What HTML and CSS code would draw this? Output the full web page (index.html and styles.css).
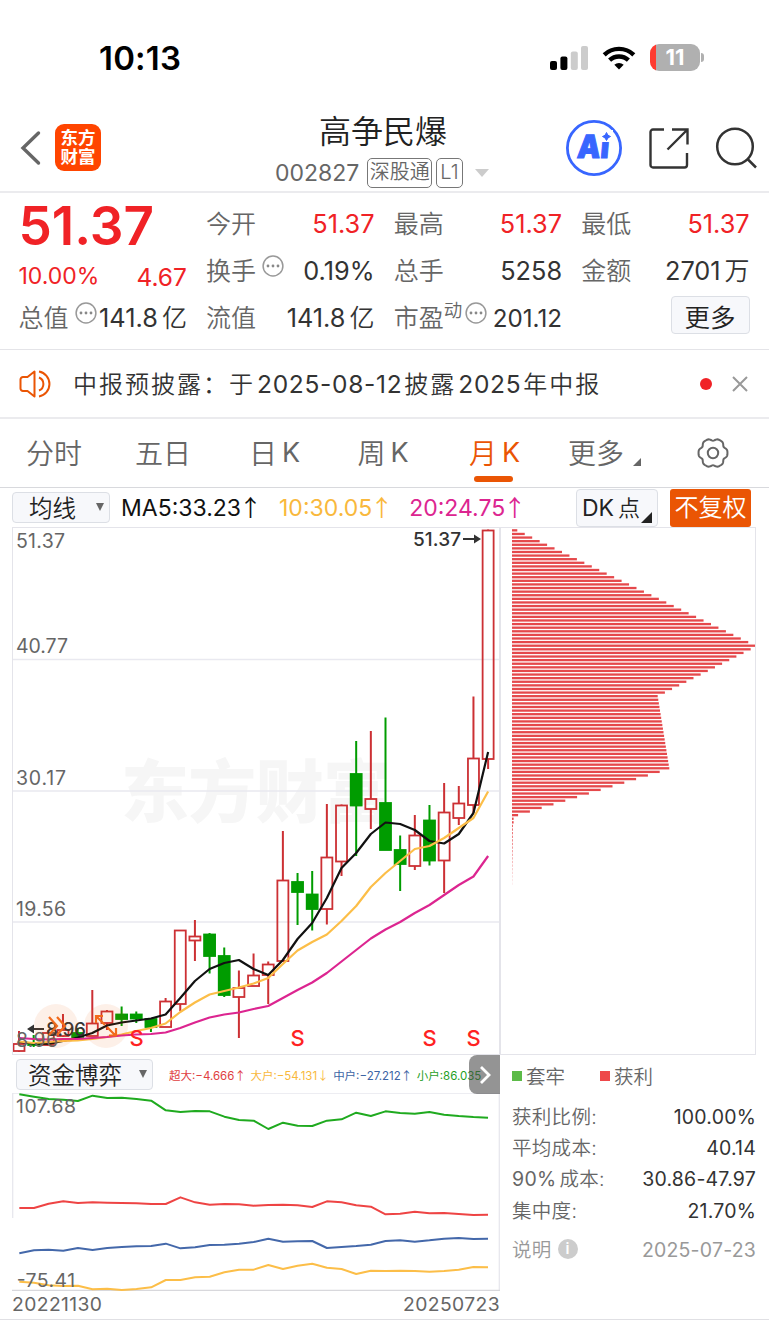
FILE: index.html
```html
<!DOCTYPE html>
<html lang="zh-CN">
<head>
    <meta charset="UTF-8">
    <meta name="viewport" content="width=device-width, initial-scale=1.0">
    <title>高争民爆 002827</title>
    <link rel="stylesheet" href="styles.css">
</head>
<body>
    <div class="status-bar">
        <span class="clock">10:13</span>
        <div class="status-icons">
            <svg width="38" height="24" viewBox="0 0 38 24">
                <rect x="0" y="15" width="7" height="9" rx="2"/>
                <rect x="10.4" y="10.5" width="7" height="13.5" rx="2"/>
                <rect x="20.8" y="5.5" width="7" height="18.5" rx="2" fill="#ccc"/>
                <rect x="31" y="0" width="7" height="24" rx="2" fill="#ccc"/>
            </svg>
            <svg class="wifi" width="34" height="26" viewBox="0 0 34 26" fill="none" stroke="#000" stroke-width="4.4">
                <path d="M2.2 9.8a21.5 21.5 0 0 1 29.6 0"/>
                <path d="M7.6 15.2a13.6 13.6 0 0 1 18.8 0"/>
                <path d="M17 24.6l-4.7-4.8a7 7 0 0 1 9.4 0z" fill="#000" stroke="none"/>
            </svg>
            <div class="battery">11</div>
        </div>
    </div>

    <div class="header">
        <svg class="back" width="22" height="36" viewBox="0 0 22 36"><path d="M18.500 3L3 18l15.500 15" fill="none" stroke="#666" stroke-width="3.4" stroke-linecap="round"/></svg>
        <div class="logo">东方<br>财富</div>
        <div class="stock">
            <div class="stock-name">高争民爆</div>
            <div class="stock-code">
                <span>002827</span>
                <span class="tag">深股通</span>
                <span class="tag">L1</span>
                <svg width="14" height="8" viewBox="0 0 14 8"><path d="M0 0h14l-7 8z" fill="#ccc"/></svg>
            </div>
        </div>
        <div class="header-icons">
            <svg width="58" height="58" viewBox="0 0 58 58">
                <circle cx="29" cy="29" r="26.600" fill="none" stroke="#3866ff" stroke-width="2.800"/>
                <g transform="translate(11.500 38.500) skewX(-5)"><text class="ai-text" textLength="32" lengthAdjust="spacingAndGlyphs">Ai</text></g>
                <path d="M35 11h13v12h-13z" fill="#fff"/>
                <path d="M41.500 13.500q1 3.500 4 4q-3 .8-4 4q-1-3.200-4-4q3-.5 4-4z" fill="#3866ff" stroke="#3866ff"/>
            </svg>
            <svg width="40" height="42" viewBox="0 0 40 42" fill="none" stroke="#333" stroke-width="2.400">
                <path d="M15 2.500H4a2.500 2.500 0 0 0-2.500 2.500v33a2.500 2.500 0 0 0 2.500 2.500h31.500a2.500 2.500 0 0 0 2.500-2.500V26"/>
                <path d="M23 2.500h15.500v15M38 3L18.500 22.500"/>
            </svg>
            <svg width="42" height="42" viewBox="0 0 42 42" fill="none" stroke="#333" stroke-width="2.500">
                <circle cx="20" cy="19.500" r="17.800"/><path d="M32.500 32l8.500 8.500"/>
            </svg>
        </div>
    </div>

    <div class="quote">
        <div class="price">51.37</div>
        <div class="change"><span>10.00%</span><span>4.67</span></div>
        <div class="cell c2"><label>今开</label><b class="up">51.37</b></div>
        <div class="cell c3"><label>最高</label><b class="up">51.37</b></div>
        <div class="cell c4"><label>最低</label><b class="up">51.37</b></div>
        <div class="cell c2"><label>换手</label><svg class="dots"><use href="#dots"/></svg><b>0.19%</b></div>
        <div class="cell c3"><label>总手</label><b>5258</b></div>
        <div class="cell c4"><label>金额</label><b>2701<span class="unit">万</span></b></div>
        <div class="cell c1"><label>总值</label><svg class="dots"><use href="#dots"/></svg><b>141.8<span class="unit">亿</span></b></div>
        <div class="cell c2"><label>流值</label><b>141.8<span class="unit">亿</span></b></div>
        <div class="cell c3 pe"><label>市盈<sup>动</sup></label><svg class="dots"><use href="#dots"/></svg><b>201.12</b></div>
        <button class="more-btn">更多</button>
    </div>

    <div class="notice">
        <svg width="34" height="28" viewBox="0 0 34 28" fill="none" stroke="#ea5504" stroke-width="2">
            <path d="M15.500 1.500v25l-7-5.500H4a2.500 2.500 0 0 1-2.500-2.500V9.500A2.500 2.500 0 0 1 4 7h4.500z" stroke-linejoin="round"/>
            <path d="M20 7.500a7 7 0 0 1 0 13M20 1.500a12.700 12.700 0 0 1 0 25"/>
        </svg>
        <p>中报预披露：于<span>2025-08-12</span>披露<span>2025</span>年中报</p>
        <i class="red-dot"></i>
        <svg width="16" height="16" viewBox="0 0 16 16"><path d="M1 1l14 14M15 1L1 15" stroke="#999" stroke-width="2"/></svg>
    </div>

    <div class="tabs">
        <div class="tab">分时</div>
        <div class="tab">五日</div>
        <div class="tab">日<span>K</span></div>
        <div class="tab">周<span>K</span></div>
        <div class="tab active">月<span>K</span></div>
        <div class="tab">更多<svg class="corner" width="8" height="8" viewBox="0 0 8 8"><path d="M8 0v8H0z" fill="#666"/></svg></div>
        <div class="tab">
            <svg class="gear" width="34" height="32" viewBox="-17 -16 34 32" fill="none" stroke="#666" stroke-width="2">
                <path id="gearPath"/><circle r="5.200"/>
            </svg>
        </div>
    </div>

    <div class="toolbar">
        <div class="select">均线<i></i></div>
        <div class="ma ma5">MA5:33.23<em>↑</em></div>
        <div class="ma ma10">10:30.05<em>↑</em></div>
        <div class="ma ma20">20:24.75<em>↑</em></div>
        <div class="dk">DK<span>点</span><svg width="11" height="11" viewBox="0 0 11 11"><path d="M11 0v11H0z" fill="#222"/></svg></div>
        <div class="fq">不复权</div>
    </div>

    <div class="charts">
        <svg id="kline" width="488" height="528" viewBox="12 527 488 528">
            <text class="watermark" x="121" y="817" textLength="270">东方财富</text>
            <g class="grid"><path d="M12 659.500h488M12 791h488M12 922h488"/></g>
            <g id="candles"></g>
            <g class="lines">
                <polyline id="ma5" stroke="#111"/>
                <polyline id="ma10" stroke="#fcbe48"/>
                <polyline id="ma20" stroke="#dc2590"/>
            </g>
            <g class="axis">
                <text x="16" y="548" textLength="49">51.37</text>
                <text x="16" y="653" textLength="52">40.77</text>
                <text x="16" y="785" textLength="50">30.17</text>
                <text x="16" y="916" textLength="50">19.56</text>
                <text x="16" y="1047" textLength="42">8.96</text>
            </g>
            <g class="marks">
                <text x="413" y="546" textLength="48">51.37</text>
                <text x="46" y="1036" textLength="40">8.96</text>
                <path d="M463 539h15M44 1029H29"/>
                <path class="head" d="M474 534.500l7 4.500l-7 4.500zM34 1024.500l-7 4.500l7 4.500z"/>
            </g>
            <g class="signals">
                <text x="136.500" y="1046">S</text>
                <text x="297.500" y="1046">S</text>
                <text x="429.500" y="1046">S</text>
                <text x="473.500" y="1046">S</text>
            </g>
            <g class="tools">
                <circle cx="56" cy="1026" r="22"/><circle cx="106" cy="1026" r="22"/>
                <path d="M49 1017l8 9l-8 9M57 1017l8 9l-8 9M105 1025l-9-9M96 1023v-7h7M107 1027l9 9M116 1028v7.500h-7"/>
            </g>
        </svg>
        <svg id="chips" width="256" height="528" viewBox="500 527 256 528"></svg>
    </div>

    <div class="bottom">
        <div class="left">
            <div class="sub-toolbar">
                <div class="select">资金博弈<i></i></div>
                <div class="flow huge">超大:−4.666<em>↑</em></div>
                <div class="flow big">大户:−54.131<em>↓</em></div>
                <div class="flow mid">中户:−27.212<em>↑</em></div>
                <div class="flow small">小户:86.035</div>
                <div class="next"><svg width="12" height="20" viewBox="0 0 12 20"><path d="M2 2l8 8l-8 8" fill="none" stroke="#fff" stroke-width="2.800"/></svg></div>
            </div>
            <svg id="flow" width="488" height="198" viewBox="36 39 1464 594">
                <path class="frame" d="M38 39v375M36 39h1464M1498 39v594"/>
                <path class="base" d="M36 631h1464"/>
                <g class="flow-lines">
                    <polyline id="small" stroke="#1faa1f"/>
                    <polyline id="huge" stroke="#ee4444"/>
                    <polyline id="mid" stroke="#4468aa"/>
                    <polyline id="big" stroke="#fcbe48"/>
                </g>
                <text x="48" y="99" textLength="180">107.68</text>
                <text x="50" y="620" textLength="175">-75.41</text>
            </svg>
            <div class="dates"><span>20221130</span><span>20250723</span></div>
        </div>
        <div class="chip-info">
            <div class="legend"><i class="green"></i><span>套牢</span><i class="red"></i><span>获利</span></div>
            <div class="row"><label>获利比例:</label><b>100.00%</b></div>
            <div class="row"><label>平均成本:</label><b>40.14</b></div>
            <div class="row"><label><span>90%</span>成本:</label><b>30.86-47.97</b></div>
            <div class="row"><label>集中度:</label><b>21.70%</b></div>
            <div class="row note"><label>说明<i>i</i></label><b>2025-07-23</b></div>
        </div>
    </div>

    <svg class="defs">
        <symbol id="dots" viewBox="0 0 22 22">
            <circle cx="11" cy="11" r="9.900" fill="none" stroke="#999" stroke-width="1.500"/>
            <g fill="#888"><circle cx="6" cy="11" r="1.400"/><circle cx="11" cy="11" r="1.400"/><circle cx="16" cy="11" r="1.400"/></g>
        </symbol>
    </svg>
    <script src="script.js"></script>
</body>
</html>
```
FILE: styles.css
```css
:root {
    --red: #f02226;
    --orange: #ea5504;
    --gray: #666;
    --dark: #333;
    --line: #ebebee;
    --cjk: 350;
}

* { box-sizing: border-box; }
body { margin: 0; width: 769px; height: 1325px; overflow: hidden; background: #fff; color: var(--dark); font-family: Inter, "Noto Sans CJK SC", sans-serif; font-weight: 380; }
b, i, em { font-weight: inherit; font-style: normal; }
svg { flex: none; display: block; }
.defs { display: none; }

.status-bar { height: 92px; padding: 24px 69px 0 99px; display: flex; justify-content: space-between; }
.clock { font-size: 33px; line-height: 68px; font-weight: 600; color: #000; letter-spacing: 0.2px; }
.status-icons { display: flex; align-items: center; height: 67px; }
.wifi { margin: 0 14px 0 14px; }
.battery { position: relative; width: 50px; height: 27px; border-radius: 9px; background: linear-gradient(90deg, #ff3b30 6px, #b0b0b0 6px); color: #fff; font-size: 22px; line-height: 27px; font-weight: 650; text-align: center; }
.battery::after { content: ""; position: absolute; right: -4px; top: 9px; width: 3px; height: 9px; border-radius: 0 3px 3px 0; background: #b0b0b0; }

.header { height: 101px; border-bottom: 2px solid var(--line); display: flex; position: relative; padding: 20px 12px 0 20px; }
.back { margin-top: 18px; }
.logo { width: 46px; height: 47px; margin: 12px 0 0 13px; border-radius: 9px; background: #ff4500; color: #fff; font-size: 17.5px; line-height: 19px; padding-top: 4px; font-weight: 700; text-align: center; }
.stock { width: 240px; margin-left: 161px; }
.stock-name { font-size: 32px; line-height: 40px; font-weight: var(--cjk); color: #222; padding-left: 57px; }
.stock-code { display: flex; align-items: center; height: 42px; margin-top: 0; font-size: 23px; color: var(--gray); padding-left: 13px; }
.tag { border: 1.5px solid #777; border-radius: 5px; height: 30px; line-height: 27px; font-size: 20px; font-weight: var(--cjk); padding: 0 1.5px; margin-left: 4px; }
.tag + .tag { padding: 0 3px; }
.tag:nth-child(2) { margin-left: 8px; }
.stock-code svg { margin-left: 12px; }
.header-icons { display: flex; align-items: center; height: 72px; margin-left: auto; gap: 26px; }
.ai-text { font: 900 32px Inter; fill: #3866ff; stroke: #3866ff; stroke-width: 1; }

.quote { height: 157px; border-bottom: 1px solid #e4e4e8; padding: 7px 18.5px 0 18.5px; display: grid; grid-template-columns: repeat(4, 168.4px); grid-template-rows: repeat(3, 47px); column-gap: 19.2px; font-size: 25.3px; }
.price { grid-area: 1 / 1; font-size: 53px; font-weight: 600; line-height: 53px; color: var(--red); }
.change { grid-area: 2 / 1; display: flex; justify-content: space-between; color: var(--red); font-size: 23px; line-height: 59px; }
.change span + span { font-size: 24.5px; line-height: 61px; }
.cell { display: flex; align-items: center; white-space: nowrap; }
.cell label { color: var(--gray); font-weight: var(--cjk); font-size: 25px; padding-bottom: 3px; }
.cell b { margin-left: auto; }
.cell b:has(.unit) { padding-bottom: 3px; }
.c1 { grid-column: 1; }
.c2 { grid-column: 2; }
.c3 { grid-column: 3; }
.c4 { grid-column: 4; }
.up { color: var(--red); }
.unit { margin-left: 4px; font-weight: var(--cjk); font-size: 25px; }
.dots { width: 22px; height: 22px; margin: -10px 0 0 6px; }
.pe sup { font-size: 18.5px; line-height: 0; vertical-align: 10px; }
.pe .dots { margin-left: 3px; }
.pe b { font-size: 24.2px; padding-top: 1px; }
.more-btn { grid-column: 4; justify-self: end; align-self: center; width: 79px; height: 38px; padding: 0 0 4px; margin-bottom: 5px; background: #f7f8fb; border: 1px solid #dcdfe5; border-radius: 4px; font: 350 25.5px "Noto Sans CJK SC", sans-serif; color: #222; }

.notice { height: 69px; border-bottom: 2px solid var(--line); display: flex; align-items: center; padding: 0 21px 0 19px; }
.notice p { margin: 0 0 2px 20px; font-size: 24px; font-weight: var(--cjk); letter-spacing: 2px; white-space: nowrap; }
.notice p span { font-size: 24.5px; font-weight: 380; letter-spacing: 0.7px; margin: 0 2px; }
.red-dot { width: 12px; height: 12px; border-radius: 50%; background: var(--red); margin: 0 20px 0 auto; }

.tabs { height: 69px; border-bottom: 1px solid #d8d9dd; display: grid; grid-template-columns: 108px repeat(6, 110px); }
.tab { display: flex; justify-content: center; align-items: center; position: relative; font-size: 28px; font-weight: var(--cjk); color: var(--gray); padding-bottom: 2px; }
.tab span { margin-left: 5px; font-weight: 380; font-size: 27px; }
.tab:nth-child(3), .tab:nth-child(5), .tab:nth-child(6) { padding-left: 3px; }
.active { color: var(--orange); }
.active::after { content: ""; position: absolute; bottom: 5px; left: 36px; width: 39px; height: 6px; border-radius: 3px; background: var(--orange); }
.corner { margin: 20px 0 0 9px; }
.gear { margin-top: 1px; }

.toolbar { height: 39px; display: flex; align-items: center; padding: 0 18px 0 12px; font-size: 23px; white-space: nowrap; }
.select { height: 31px; border: 1px solid #dcdfe5; border-radius: 4px; background: #f7f8fb; display: flex; align-items: center; justify-content: space-between; padding: 0 5px 2px 16px; width: 98px; font-size: 23.5px; font-weight: var(--cjk); color: #222; }
.select i { border: 4.5px solid transparent; border-top: 8px solid #666; border-bottom: 0; }
.ma em, .flow em { display: inline-block; width: 18px; text-indent: -2px; font-family: "Noto Sans CJK SC", sans-serif; line-height: 1; }
.ma5 { margin-left: 11px; color: #111; }
.ma10 { margin-left: 20px; color: #f9b83c; }
.ma20 { margin-left: 19px; color: #dc2590; }
.dk { margin-left: auto; width: 82px; height: 38px; border: 1px solid #dcdfe5; border-radius: 4px; background: #f7f8fb; position: relative; line-height: 36px; padding-left: 5px; color: #222; }
.dk span { margin-left: 4px; font-weight: var(--cjk); font-size: 22px; }
.dk svg { position: absolute; right: 5px; bottom: 3px; }
.fq { width: 81px; height: 38px; margin-left: 12px; border-radius: 3px; background: var(--orange); color: #fff; font-size: 24px; font-weight: var(--cjk); line-height: 37px; text-align: center; }

.charts { display: flex; padding-left: 12px; height: 529px; }
#kline, #chips { outline: 1px solid #e4e4ea; outline-offset: -1px; }
.watermark { font: 900 68px "Noto Sans CJK SC"; fill: #f6f6f6; }
.grid { stroke: #e9e9f0; stroke-width: 1.5; }
.lines { fill: none; stroke-width: 2.2; stroke-linejoin: round; }
.axis { font-size: 19.5px; fill: #666; }
.marks { font-size: 19px; font-weight: 480; fill: #333; }
.marks path { fill: none; stroke: #333; stroke-width: 1.8; }
.marks .head { fill: #333; stroke: none; }
.signals { font-size: 22px; font-weight: 500; fill: #f22; text-anchor: middle; }
.tools circle { fill: rgba(234, 85, 4, 0.09); }
.tools path { fill: none; stroke: #f26a1b; stroke-width: 2.2; }

.bottom { display: flex; padding-left: 12px; height: 264px; border-bottom: 1px solid #e0e0e4; }
.left { width: 488px; }
.sub-toolbar { height: 37px; display: flex; align-items: center; position: relative; padding-left: 4px; white-space: nowrap; }
.sub-toolbar .select { width: 137px; padding-left: 11px; margin-right: 10px; }
.flow { font-size: 11.5px; margin-left: 6px; }
.flow em { width: 10px; text-indent: 0; }
.flow.huge { color: #e04040; }
.flow.big { color: #f9b83c; }
.flow.mid { color: #3c64a4; }
.flow.small { color: #1fa01f; }
.next { position: absolute; right: 0; top: -1px; width: 31px; height: 39px; border-radius: 8px 0 0 8px; background: rgba(70, 70, 70, 0.58); display: flex; align-items: center; justify-content: center; }
.frame { fill: none; stroke: #e8e8ee; stroke-width: 4; }
.base { stroke: #d8d8dc; stroke-width: 4; }
.flow-lines { fill: none; stroke-width: 6; stroke-linejoin: round; }
#flow text { font-size: 58px; fill: #666; }
.dates { display: flex; justify-content: space-between; font-size: 19.3px; line-height: 27px; color: var(--gray); letter-spacing: 0.4px; }

.chip-info { width: 256px; padding: 5px 0 0 12px; font-size: 19.5px; color: var(--gray); font-weight: var(--cjk); }
.legend { display: flex; align-items: center; height: 32px; margin-bottom: 9px; }
.legend span { padding-bottom: 4px; }
.legend i { width: 10px; height: 10px; margin: 0 4px 2px 0; }
.green { background: #5cbb48; }
.red { background: #ee484a; }
.legend .red { margin-left: 35px; }
.row { height: 31.2px; display: flex; justify-content: space-between; align-items: center; }
.row label { padding-bottom: 4px; letter-spacing: 0.3px; }
.row label span { margin-right: 3px; }
.row b, .row label span { font-weight: 380; }
.row b { color: var(--dark); font-size: 19.5px; letter-spacing: 0.2px; padding-bottom: 1px; }
.note { margin-top: 8px; color: #999; }
.note label { display: flex; align-items: center; }
.row.note b { color: #999; }
.note i { width: 20px; height: 20px; border-radius: 50%; background: #ccc; color: #fff; font: 600 15px/20px Inter; text-align: center; margin: 2px 0 0 6px; }
```
FILE: script.js
```js
const STEP = 14.66;

// [high, body top, body bottom, low, rising]
const candles = [
    [1031, 1044, 1051, 1052, 1], [1035, 1043, 1045, 1047, 0], [1030, 1033, 1045, 1046, 1],
    [1014, 1030, 1036, 1037, 1], [1028, 1033, 1037, 1039, 0], [990, 1023.5, 1036, 1036, 1],
    [1010, 1011.5, 1023, 1030, 1], [1006.5, 1014.5, 1019, 1026, 0], [1011.5, 1014.5, 1018.5, 1023, 0],
    [1019, 1019, 1027, 1032, 0], [998, 1001.5, 1027, 1027, 1], [930, 930.5, 1004, 1011, 1],
    [920, 936.5, 940.5, 961, 1], [933, 934.5, 956, 973.5, 0], [947.5, 956, 995, 997, 0],
    [970.5, 988, 997, 1038, 1], [953.5, 975.5, 986, 986, 1], [961.5, 964.5, 975, 1004, 1],
    [831, 880.5, 961, 962, 1], [873, 882, 892, 925, 0], [871, 894.5, 909, 930.5, 0],
    [804, 857.5, 909, 924.5, 1], [804.5, 805.5, 861.5, 876, 1], [741, 774, 805.5, 856, 0],
    [731, 799, 809, 829, 1], [717.5, 803, 850, 850, 0], [835.5, 850, 864, 891, 0],
    [815, 835.5, 866, 870, 1], [805, 820.5, 860.5, 865.5, 0], [783, 812.5, 860.5, 893, 1],
    [786, 803.5, 818, 825, 1], [696.5, 758.5, 805, 813, 1], [529.5, 530.5, 759, 769, 1]
];

const averages = {
    ma5: [1042, 1043.5, 1044, 1041, 1037.5, 1033, 1025.5, 1022.5, 1020.5, 1018.5, 1014.5, 998, 981, 969, 963, 960, 969, 975, 960, 939, 923, 898, 868, 853, 834, 822.5, 824, 830, 841, 843.5, 834, 813, 752],
    ma10: [1041.5, 1043, 1042, 1041, 1040.5, 1039, 1037, 1034.5, 1031, 1028, 1023.5, 1012, 1002.5, 994.5, 991, 987.5, 983.5, 978, 964, 950.5, 942, 934.5, 921, 906, 887, 873, 861, 849, 846, 838, 828, 818, 791.5],
    ma20: [1038, 1039, 1039.5, 1039, 1039, 1038, 1037, 1035.5, 1034.5, 1034, 1032.5, 1028, 1022.5, 1017.5, 1014.5, 1012.5, 1009, 1006, 998, 990, 982.5, 973, 961.5, 950, 938.5, 929.5, 922, 913, 905, 895, 885, 876.5, 856]
};

const flows = {
    small: [43, 50, 57, 59, 63, 47, 54, 53, 57, 62, 91, 96, 93, 94, 110, 120, 122, 147, 128, 137, 138, 122, 118, 98, 108, 94, 99, 101, 96, 104, 108, 111, 113],
    huge: [384, 384, 371, 364, 369, 367, 368, 369, 370, 372, 372, 352, 367, 374, 372, 373, 377, 375, 374, 376, 381, 364, 367, 376, 380, 403, 401, 395, 400, 399, 402, 405, 404],
    mid: [520, 511, 509, 512, 504, 510, 504, 501, 499, 498, 491, 505, 502, 495, 494, 491, 486, 476, 485, 484, 483, 504, 501, 498, 494, 483, 481, 485, 481, 476, 474, 477, 476],
    big: [605, 608, 616, 618, 617, 628, 626, 630, 627, 622, 600, 600, 592, 590, 577, 569, 569, 555, 567, 557, 551, 563, 567, 582, 572, 573, 572, 573, 575, 573, 569, 561, 562]
};

document.getElementById('candles').innerHTML = candles.map(([high, top, bottom, low, rising], i) => {
    const x = 19 + i * STEP;
    const color = rising ? '#cc3034' : '#009c00';
    return `<path d="M${x} ${high}V${top}M${x} ${bottom}V${low}" stroke="${color}" stroke-width="2"/>
        <rect x="${x - 5.5}" y="${top}" width="11" height="${bottom - top}" fill="${rising ? 'none' : color}" stroke="${color}" stroke-width="1.8"/>`;
}).join('');

function drawLines(series, start, step) {
    for (const id in series) {
        const points = series[id].map((y, i) => `${start + i * step},${y}`).join(' ');
        document.getElementById(id).setAttribute('points', points);
    }
}
drawLines(averages, 19, STEP);
drawLines(flows, 58, 43.94);

// cost distribution, one bar per price level
function chipWidth(i) {
    if (i <= 32) return 5.3 + i * 7.45;
    if (i <= 45) return 238.7 - (i - 33) * 7.15;
    if (i <= 66) return 145.7 + (i - 46) * 0.58;
    if (i <= 79) return 147.7 - (i - 67) * 11.8;
    return i < 82 ? 1.6 : 1;
}
let bars = '';
for (let i = 0; i < 99; i++) {
    const opacity = i < 82 ? 1 : (100 - i) / 22;
    bars += `<rect x="512" y="${529.2 + i * 3.605}" width="${chipWidth(i)}" height="2.3" fill="#e5484b" opacity="${opacity}"/>`;
}
document.getElementById('chips').innerHTML = bars;

// six-lobed gear outline
let gear = '';
for (let a = 0; a < 360; a += 3) {
    const t = a * Math.PI / 180;
    const r = 13.7 + 1.1 * Math.cos(6 * t) - 0.35 * Math.cos(12 * t);
    gear += `${a ? 'L' : 'M'}${(r * Math.cos(t)).toFixed(2)} ${(r * Math.sin(t)).toFixed(2)}`;
}
document.getElementById('gearPath').setAttribute('d', gear + 'Z');
```
